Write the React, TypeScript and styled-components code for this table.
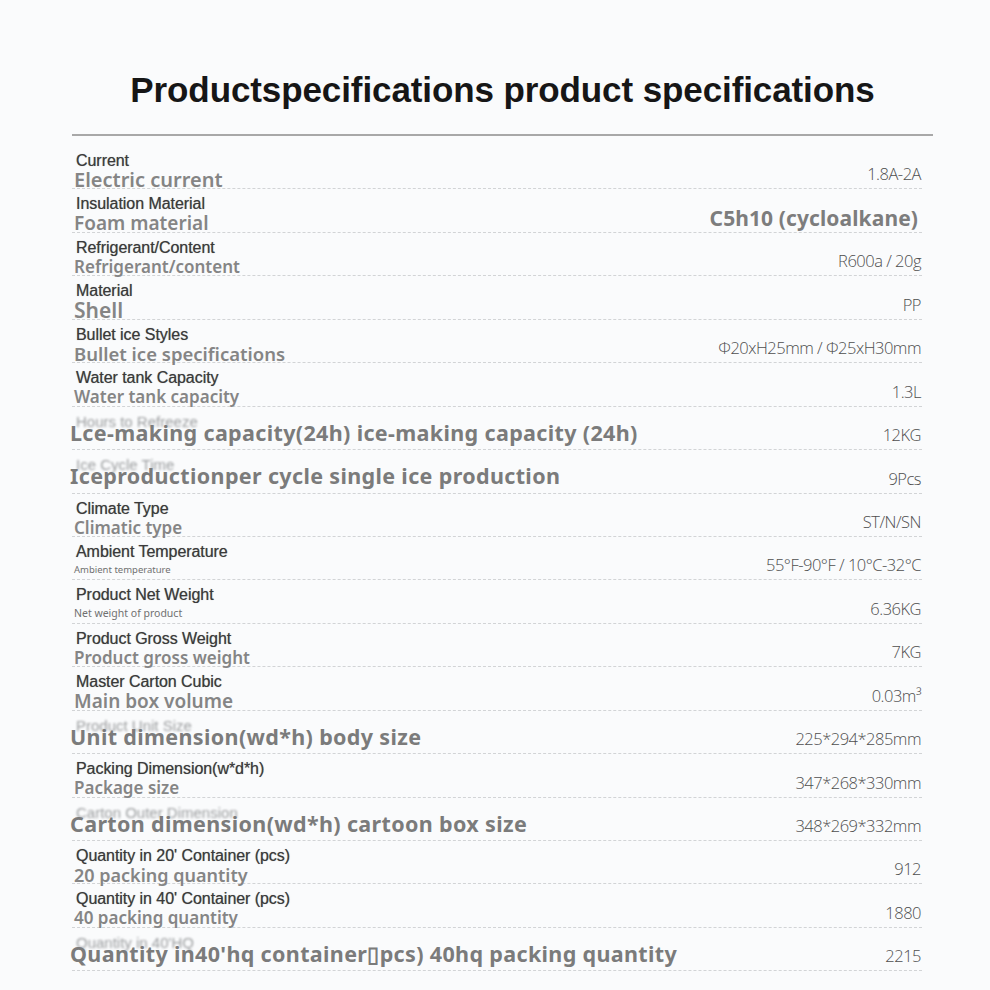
import styled, { createGlobalStyle } from "styled-components";

type Spec = {
  en?: string;
  ghost?: string;
  tr: string;
  size?: number;
  big?: boolean;
  value: string;
  valueBig?: boolean;
};

const specs: Spec[] = [
  { en: "Current", tr: "Electric current", size: 20, value: "1.8A-2A" },
  { en: "Insulation Material", tr: "Foam material", size: 19, value: "C5h10 (cycloalkane)", valueBig: true },
  { en: "Refrigerant/Content", tr: "Refrigerant/content", size: 17, value: "R600a / 20g" },
  { en: "Material", tr: "Shell", size: 21, value: "PP" },
  { en: "Bullet ice Styles", tr: "Bullet ice specifications", size: 18.5, value: "Φ20xH25mm / Φ25xH30mm" },
  { en: "Water tank Capacity", tr: "Water tank capacity", size: 17, value: "1.3L" },
  { ghost: "Hours to Refreeze", tr: "Lce-making capacity(24h) ice-making capacity (24h)", big: true, value: "12KG" },
  { ghost: "Ice Cycle Time", tr: "Iceproductionper cycle single ice production", big: true, value: "9Pcs" },
  { en: "Climate Type", tr: "Climatic type", size: 17, value: "ST/N/SN" },
  { en: "Ambient Temperature", tr: "Ambient temperature", size: 9.5, value: "55°F-90°F / 10°C-32°C" },
  { en: "Product Net Weight", tr: "Net weight of product", size: 10.5, value: "6.36KG" },
  { en: "Product Gross Weight", tr: "Product gross weight", size: 17, value: "7KG" },
  { en: "Master Carton Cubic", tr: "Main box volume", size: 19, value: "0.03m³" },
  { ghost: "Product Unit Size", tr: "Unit dimension(wd*h) body size", big: true, value: "225*294*285mm" },
  { en: "Packing Dimension(w*d*h)", tr: "Package size", size: 17, value: "347*268*330mm" },
  { ghost: "Carton Outer Dimension", tr: "Carton dimension(wd*h) cartoon box size", big: true, value: "348*269*332mm" },
  { en: "Quantity in 20' Container (pcs)", tr: "20 packing quantity", size: 18, value: "912" },
  { en: "Quantity in 40' Container (pcs)", tr: "40 packing quantity", size: 17, value: "1880" },
  { ghost: "Quantity in 40'HQ", tr: "Quantity in40'hq container\u25AFpcs) 40hq packing quantity", big: true, value: "2215" },
];

const GlobalStyle = createGlobalStyle`
  body {
    margin: 0;
    background: #fafbfc;
  }
`;

const Page = styled.div`
  width: 990px;
  height: 990px;
  box-sizing: border-box;
  padding: 68px 0 0 72px;
  overflow: hidden;
`;

const Header = styled.div`
  width: 861px;
  border-bottom: 2px solid #a8a8a8;
  padding-bottom: 22px;
`;

const Title = styled.h1`
  margin: 0;
  text-align: center;
  font-family: "Liberation Sans", Arial, sans-serif;
  font-weight: 700;
  font-size: 35px;
  line-height: 44px;
  letter-spacing: -0.1px;
  color: #161616;
`;

const Table = styled.div`
  width: 850px;
  margin-top: 10px;
`;

const Row = styled.div`
  position: relative;
  height: 43.45px;
  box-sizing: border-box;
  border-bottom: 1px dashed #d2d4d6;
  display: flex;
  justify-content: space-between;
  align-items: flex-start;
`;

const LabelCol = styled.div<{ $big?: boolean }>`
  display: flex;
  flex-direction: column;
  padding-top: ${(p) => (p.$big ? "14px" : "6px")};
  padding-left: 2px;
`;

const En = styled.div`
  padding-left: 2px;
  font-family: "Liberation Sans", Arial, sans-serif;
  font-size: 16px;
  line-height: 18px;
  color: #3a3a3a;
  letter-spacing: -0.05px;
  white-space: nowrap;
  text-shadow: 0 0 0.7px rgba(40, 40, 40, 0.55);
`;

const Ghost = styled.div`
  position: absolute;
  top: 7px;
  left: 4px;
  font-family: "Liberation Sans", Arial, sans-serif;
  font-size: 15px;
  line-height: 16px;
  color: #9c9ea0;
  filter: blur(1px);
  white-space: nowrap;
`;

const Tr = styled.div<{ $size: number }>`
  position: relative;
  font-family: "Noto Sans", "Open Sans", sans-serif;
  font-weight: ${(p) => (p.$size < 12 ? 400 : 600)};
  font-size: ${(p) => p.$size}px;
  line-height: ${(p) => (p.$size < 12 ? "18px" : "20px")};
  color: ${(p) => (p.$size < 12 ? "#707070" : "#858585")};
  white-space: nowrap;
`;

const Big = styled.div`
  position: relative;
  margin-left: -4px;
  font-family: "Noto Sans", "Open Sans", sans-serif;
  font-weight: 700;
  font-size: 21.5px;
  line-height: 24px;
  letter-spacing: 0.35px;
  color: #7b7b7b;
  white-space: nowrap;
`;

const Value = styled.div<{ $big?: boolean }>`
  align-self: flex-end;
  padding-bottom: 3px;
  padding-right: ${(p) => (p.$big ? "4px" : "1px")};
  font-family: ${(p) => (p.$big ? '"Noto Sans", sans-serif' : '"Open Sans", "Noto Sans", sans-serif')};
  font-weight: ${(p) => (p.$big ? 700 : 300)};
  font-size: ${(p) => (p.$big ? "21px" : "16.5px")};
  line-height: 22px;
  letter-spacing: ${(p) => (p.$big ? "0.1px" : "-0.5px")};
  color: ${(p) => (p.$big ? "#7d7d7d" : "#4e4e4e")};
  white-space: nowrap;
`;

export default function App() {
  return (
    <Page>
      <GlobalStyle />
      <Header>
        <Title>Productspecifications product specifications</Title>
      </Header>
      <Table>
        {specs.map((s, i) => (
          <Row key={i}>
            {s.ghost && <Ghost>{s.ghost}</Ghost>}
            <LabelCol $big={s.big}>
              {s.en && <En>{s.en}</En>}
              {s.big ? <Big>{s.tr}</Big> : <Tr $size={s.size ?? 17}>{s.tr}</Tr>}
            </LabelCol>
            <Value $big={s.valueBig}>{s.value}</Value>
          </Row>
        ))}
      </Table>
    </Page>
  );
}
